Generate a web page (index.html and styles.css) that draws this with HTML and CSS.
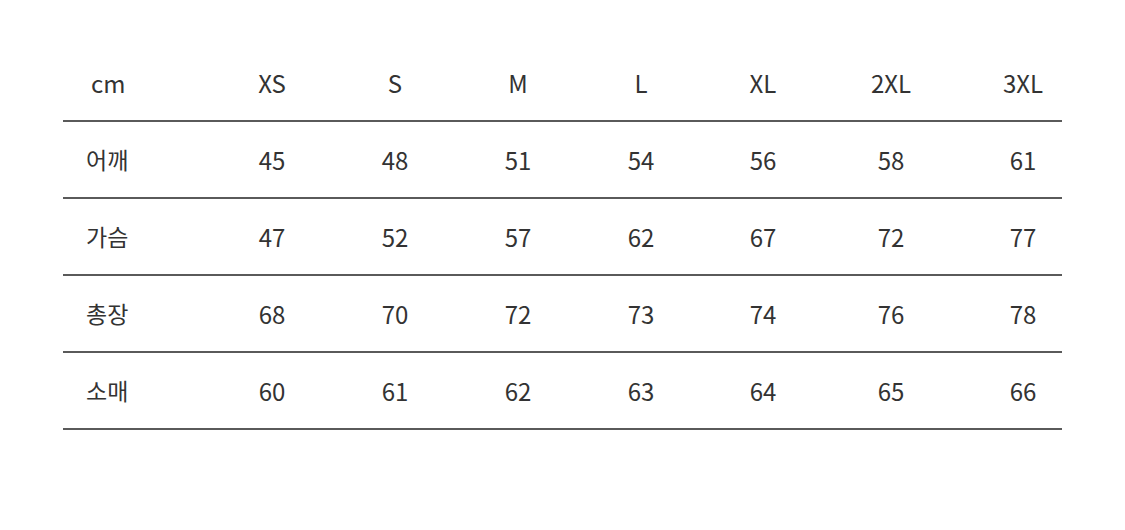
FILE: index.html
```html
<!DOCTYPE html>
<html lang="ko">
<head>
<meta charset="utf-8">
<link rel="stylesheet" href="styles.css">
</head>
<body>
<div class="size-table">
  <div class="row head">
    <div class="cell label unit">cm</div>
    <div class="cell">XS</div><div class="cell">S</div><div class="cell">M</div><div class="cell">L</div><div class="cell">XL</div><div class="cell">2XL</div><div class="cell last">3XL</div>
  </div>
  <div class="row">
    <div class="cell label">어깨</div>
    <div class="cell">45</div><div class="cell">48</div><div class="cell">51</div><div class="cell">54</div><div class="cell">56</div><div class="cell">58</div><div class="cell last">61</div>
  </div>
  <div class="row">
    <div class="cell label">가슴</div>
    <div class="cell">47</div><div class="cell">52</div><div class="cell">57</div><div class="cell">62</div><div class="cell">67</div><div class="cell">72</div><div class="cell last">77</div>
  </div>
  <div class="row">
    <div class="cell label">총장</div>
    <div class="cell">68</div><div class="cell">70</div><div class="cell">72</div><div class="cell">73</div><div class="cell">74</div><div class="cell">76</div><div class="cell last">78</div>
  </div>
  <div class="row">
    <div class="cell label">소매</div>
    <div class="cell">60</div><div class="cell">61</div><div class="cell">62</div><div class="cell">63</div><div class="cell">64</div><div class="cell">65</div><div class="cell last">66</div>
  </div>
</div>
</body>
</html>
```

FILE: styles.css
```css
html, body {
  margin: 0;
  padding: 0;
  background: #ffffff;
}
body {
  font-family: "Noto Sans CJK KR", "Noto Sans", sans-serif;
  color: #333333;
  font-size: 24px;
}
.size-table {
  width: 999px;
  margin: 45px 0 0 63px;
}
.row {
  display: grid;
  grid-template-columns: 147px 124px 122px 124px 122px 122px 134px 104px;
  height: 75px;
  align-items: center;
  border-bottom: 2px solid #5a5a5a;
}
.cell {
  text-align: center;
  line-height: 1;
}
.cell.label {
  text-align: left;
  padding-left: 23px;
  font-size: 23px;
}
.cell.label.unit {
  padding-left: 28px;
  font-size: 24px;
}
.cell.last {
  padding-left: 26px;
}
```
